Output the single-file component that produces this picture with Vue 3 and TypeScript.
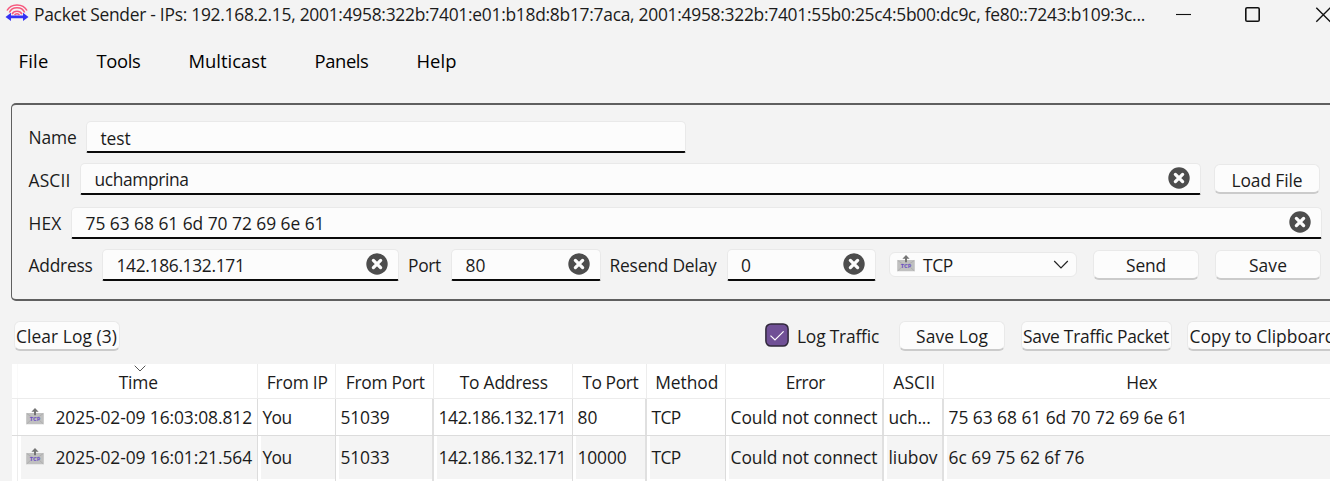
<script setup lang="ts">
import { computed, type Directive } from 'vue'

interface Label { text: string; width: number }
interface Column { title: Label; width: number }
interface Row { cells: Label[]; alt: boolean }

/* Spreads a label's letters so that it takes the given width. */
const vFit: Directive<HTMLElement, number> = {
  mounted(el, binding) {
    const natural = el.getBoundingClientRect().width
    const count = (el.textContent ?? '').length
    if (count > 0) el.style.letterSpacing = `${(binding.value - natural) / count}px`
  },
}

const title = 'Packet Sender - IPs: 192.168.2.15, 2001:4958:322b:7401:e01:b18d:8b17:7aca, 2001:4958:322b:7401:55b0:25c4:5b00:dc9c, fe80::7243:b109:3c...'

const menus: Label[] = [
  { text: 'File', width: 30 },
  { text: 'Tools', width: 44 },
  { text: 'Multicast', width: 78 },
  { text: 'Panels', width: 54 },
  { text: 'Help', width: 40 },
]

const columns: Column[] = [
  { title: { text: 'Time', width: 39 }, width: 240 },
  { title: { text: 'From IP', width: 61 }, width: 78 },
  { title: { text: 'From Port', width: 79 }, width: 98 },
  { title: { text: 'To Address', width: 88 }, width: 139 },
  { title: { text: 'To Port', width: 56 }, width: 74 },
  { title: { text: 'Method', width: 63 }, width: 79 },
  { title: { text: 'Error', width: 39 }, width: 158 },
  { title: { text: 'ASCII', width: 42 }, width: 60 },
  { title: { text: 'Hex', width: 31 }, width: 395 },
]

const rows: Row[] = [
  {
    alt: false,
    cells: [
      { text: '2025-02-09 16:03:08.812', width: 196.5 },
      { text: 'You', width: 29 },
      { text: '51039', width: 49 },
      { text: '142.186.132.171', width: 127.5 },
      { text: '80', width: 20 },
      { text: 'TCP', width: 29 },
      { text: 'Could not connect', width: 147 },
      { text: 'uch...', width: 42 },
      { text: '75 63 68 61 6d 70 72 69 6e 61', width: 239 },
    ],
  },
  {
    alt: true,
    cells: [
      { text: '2025-02-09 16:01:21.564', width: 196.5 },
      { text: 'You', width: 29 },
      { text: '51033', width: 49 },
      { text: '142.186.132.171', width: 127.5 },
      { text: '10000', width: 49 },
      { text: 'TCP', width: 29 },
      { text: 'Could not connect', width: 147 },
      { text: 'liubov', width: 49 },
      { text: '6c 69 75 62 6f 76', width: 136 },
    ],
  },
]

const gridStyle = computed(() => ({
  gridTemplateColumns: `6px ${columns.map((c) => `${c.width}px`).join(' ')}`,
}))
</script>

<template>
  <div class="window">
    <svg class="defs" width="0" height="0">
      <symbol id="clear" viewBox="0 0 22 22">
        <circle cx="11" cy="11" r="10.7" fill="#4d4d4d" />
        <path d="M7.4 7.4l7.2 7.2M14.6 7.4l-7.2 7.2" stroke="#fcfcfc" stroke-width="3.3" stroke-linecap="round" />
      </symbol>
      <symbol id="packet" viewBox="0 0 18 17">
        <rect x="0.2" y="5" width="17.6" height="11.2" rx="1" fill="#c0c0c0" />
        <path d="M0.6 5.5L9 11L17.4 5.5M0.6 16L6 11M17.4 16L12 11" stroke="#a9a9a9" stroke-width="0.8" fill="none" />
        <path d="M9 0L12.6 3.8H10V7.2H8V3.8H5.4Z" fill="#757575" />
        <text x="9" y="13" text-anchor="middle" textLength="10.5" lengthAdjust="spacingAndGlyphs" class="packet-text">TCP</text>
      </symbol>
    </svg>

    <header class="titlebar">
      <svg class="logo" width="24" height="20" viewBox="0 0 24 20">
        <g fill="none" stroke="#f6567c" stroke-width="1.5">
          <path d="M2 7.5A11 9.6 0 0 1 22 7.5" />
          <path d="M4.4 9.6A8 7.2 0 0 1 19.6 9.6" />
          <path d="M7.1 11.2A5.4 4.9 0 0 1 16.9 11.2" />
          <path d="M9.6 12A2.7 2.4 0 0 1 14.4 12" />
        </g>
        <path d="M.5 14L6 9.8V12.6H18V9.8L23.5 14L18 18.1V15.3H6V18.1Z" fill="#3431f4" />
      </svg>
      <span class="caption"><span v-fit="1111">{{ title }}</span></span>
      <svg class="controls" width="170" height="30" viewBox="0 0 170 30" fill="none" stroke="#111">
        <path d="M16 14.5H31" stroke-width="1.1" />
        <rect x="85.8" y="7.8" width="13.4" height="13.4" rx="1.3" stroke-width="1.6" />
        <path d="M156.3 7.7L170.3 21.7M170.3 7.7L156.3 21.7" stroke-width="1.4" />
      </svg>
    </header>

    <nav class="menu">
      <span v-for="m in menus" :key="m.text" class="menu-item"><span v-fit="m.width">{{ m.text }}</span></span>
    </nav>

    <section class="panel">
      <div class="line name-line">
        <label><span v-fit="48">Name</span></label>
        <div class="field name-field"><span v-fit="30">test</span></div>
      </div>
      <div class="line ascii-line">
        <label><span v-fit="42">ASCII</span></label>
        <div class="field ascii-field"><span v-fit="94">uchamprina</span><svg class="clear"><use href="#clear" /></svg></div>
        <button class="btn load"><span v-fit="71">Load File</span></button>
      </div>
      <div class="line hex-line">
        <label><span v-fit="33">HEX</span></label>
        <div class="field hex-field"><span v-fit="239">75 63 68 61 6d 70 72 69 6e 61</span><svg class="clear"><use href="#clear" /></svg></div>
      </div>
      <div class="line send-line">
        <label><span v-fit="64">Address</span></label>
        <div class="field address-field"><span v-fit="128">142.186.132.171</span><svg class="clear"><use href="#clear" /></svg></div>
        <label class="port-label"><span v-fit="33">Port</span></label>
        <div class="field port-field"><span v-fit="20">80</span><svg class="clear"><use href="#clear" /></svg></div>
        <label class="port-label"><span v-fit="107">Resend Delay</span></label>
        <div class="field port-field"><span v-fit="10">0</span><svg class="clear"><use href="#clear" /></svg></div>
        <div class="combo">
          <svg class="packet"><use href="#packet" /></svg>
          <span v-fit="30">TCP</span>
          <svg class="chevron" width="16" height="9" viewBox="0 0 16 9"><path d="M1.2 1L8 7.8L14.8 1" fill="none" stroke="#222" stroke-width="1.2" /></svg>
        </div>
        <button class="btn send"><span v-fit="40">Send</span></button>
        <button class="btn save"><span v-fit="38">Save</span></button>
      </div>
    </section>

    <div class="tools">
      <button class="btn"><span v-fit="101">Clear Log (3)</span></button>
      <div class="check">
        <svg width="24" height="24" viewBox="0 0 24 24">
          <rect x="0.9" y="0.9" width="22.2" height="22.2" rx="5" fill="#705096" stroke="#30283b" stroke-width="1.5" />
          <path d="M5.5 12.6L10 17L18.6 8.4" fill="none" stroke="#fff" stroke-width="1.2" />
        </svg>
        <span class="check-label"><span v-fit="82">Log Traffic</span></span>
      </div>
      <button class="btn save-log"><span v-fit="72">Save Log</span></button>
      <button class="btn save-traffic"><span v-fit="146">Save Traffic Packet</span></button>
      <button class="btn copy"><span v-fit="146">Copy to Clipboard</span></button>
    </div>

    <div class="table">
      <div class="row head" :style="gridStyle">
        <div class="stub"></div>
        <div v-for="(c, i) in columns" :key="c.title.text" class="cell">
          <svg v-if="i === 0" class="sort" width="12" height="7" viewBox="0 0 12 7"><path d="M.7 .7L6 6L11.3 .7" fill="none" stroke="#555" stroke-width="1" /></svg>
          <span v-fit="c.title.width">{{ c.title.text }}</span>
        </div>
      </div>
      <div v-for="(r, ri) in rows" :key="ri" class="row body" :class="{ alt: r.alt }" :style="gridStyle">
        <div class="stub"></div>
        <div v-for="(c, i) in r.cells" :key="i" class="cell" :class="{ first: i === 0, thick: [2, 4, 6, 7].includes(i) }">
          <svg v-if="i === 0" class="packet"><use href="#packet" /></svg>
          <span v-fit="c.width">{{ c.text }}</span>
        </div>
      </div>
    </div>
  </div>
</template>

<style>
html, body { margin: 0; background: #f3f3f3; overflow: hidden; }
</style>

<style scoped>
.window {
  width: 1330px; height: 481px; overflow: hidden; box-sizing: border-box;
  background: #f3f3f3; color: #1b1b1b;
  font: 17.4px/24px "Open Sans", "Noto Sans", sans-serif;
  white-space: nowrap;
}
.window * { box-sizing: border-box; }
.window span { flex: none; }
.defs { display: block; }
.packet-text { font: bold 5.5px "Open Sans", sans-serif; fill: #6a4fc4; }

.titlebar { display: flex; height: 30px; padding-left: 5px; }
.logo { margin-top: 3px; flex: none; }
.caption { width: 1131px; padding: 2px 0 0 5px; font-size: 17.4px; }
.controls { flex: none; }

.menu { display: flex; height: 73px; padding: 19px 0 0 18.5px; gap: 48px; font-size: 18.4px; color: #000; }

.panel {
  width: 1330px; height: 198px; padding: 16px 0 0 16.5px;
  border: 2px solid #5f5f5f; border-left-width: 1.5px; border-right: 0; border-radius: 5px 0 0 5px;
  margin-left: 11px;
}
.line { display: flex; align-items: flex-start; height: 32px; }
.line label { padding-top: 4px; flex: none; }
.ascii-line { margin-top: 10px; }
.ascii-line label { padding-top: 5px; }
.hex-line { margin-top: 12px; }
.send-line { margin-top: 10px; }
.field {
  display: flex; flex: none; height: 32px; padding: 4px 10px 0 13.5px;
  background: #fcfcfc; border: 1px solid #e9e9e9; border-bottom: 2px solid #0a0a0a; border-radius: 5px 5px 2px 2px;
}
.clear { width: 22px; height: 22px; margin: -1px 0 0 auto; }
.name-field { width: 600px; margin-left: 9.5px; }
.ascii-field { width: 1121px; margin-left: 9.5px; }
.hex-field { width: 1251px; margin-left: 9.5px; }
.ascii-field span, .hex-field span, .send-line .field span { margin-top: -1px; }
.name-field span { margin-top: -0.5px; }
.address-field { width: 297px; margin-left: 9.5px; }
.port-field { width: 149.5px; margin-left: 10px; }
.port-label { margin-left: 9px; }

.btn {
  flex: none; width: 106px; height: 30px; padding: 0; margin: 0; font: inherit; color: inherit;
  background: #fcfcfc; border: 1px solid #e9e9e9; border-bottom: 2px solid #cbcbcb; border-radius: 6px;
  line-height: 26px; text-align: center;
}
.load { margin: 1px 0 0 13px; padding-top: 2px; }
.send { margin: 1px 0 0 16px; }
.save { margin: 1px 0 0 16px; }
.combo {
  display: flex; flex: none; align-items: center; width: 188px; height: 25px; margin: 3px 0 0 13px; padding: 0 7px 0 7px;
  background: #fcfcfc; border: 1px solid #e9e9e9; border-radius: 6px;
}
.packet { width: 18px; height: 17px; flex: none; }
.combo .packet { margin: -3px 8px 0 0; }
.chevron { margin-left: auto; }

.tools { display: flex; height: 63px; padding: 20px 0 0 13.5px; }
.check { display: flex; margin-left: 645.5px; padding-top: 2px; }
.check-label { padding-left: 8px; width: 110px; margin-top: 1px; }
.save-traffic { width: 151px; margin-left: 15.5px; }
.copy { width: 151px; margin-left: 15.5px; }

.table { width: 1330px; margin-left: 12px; background: #fff; }
.row { display: grid; }
.head { height: 35px; }
.stub { border-right: 1px solid #ededed; }
.head .stub { border-right-color: #fafafa; }
.cell { display: flex; position: relative; min-width: 0; }
.head .cell { justify-content: center; padding: 6px 0 0 1.5px; border-right: 1px solid #ededed; }
.sort { position: absolute; left: 116px; top: 1px; }
.head { border-bottom: 1px solid #ececec; }
.body .cell { padding: 6px 0 0 4.5px; border-right: 1px solid #dcdcdc; }
.body .cell.thick { border-right: 2px solid #e0e0e0; }
.body { height: 37px; border-bottom: 1px solid #dcdcdc; }
.body.alt { height: 45px; border-bottom: 0; }
.body.alt .cell { padding-top: 9px; background: linear-gradient(#f4f4f4, #f4f4f4) 3px 0 / 100% 43px no-repeat; }
.body .cell.first { padding-left: 8px; }
.body .cell.first .packet { margin: 3px 11.5px 0 0; }
</style>
